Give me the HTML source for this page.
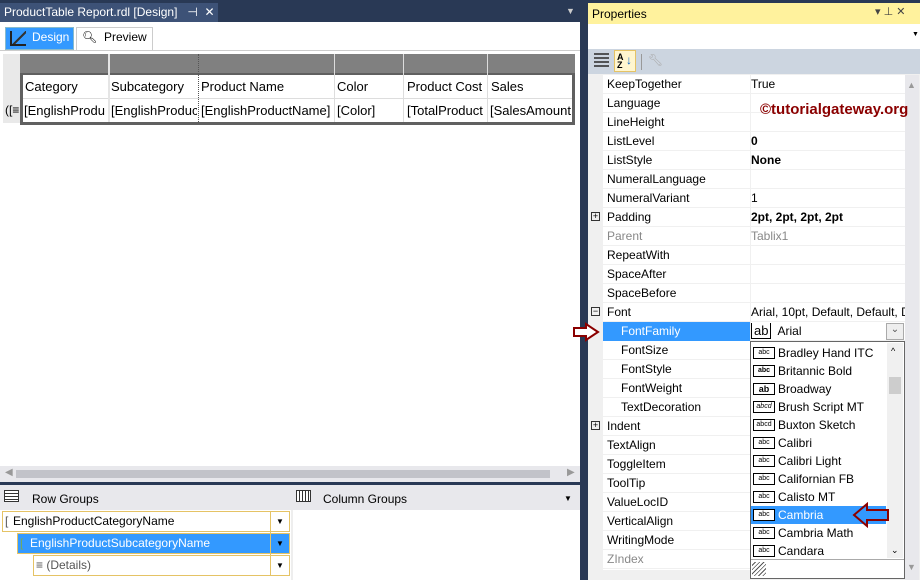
<!DOCTYPE html><html><head><style>
*{box-sizing:border-box;margin:0;padding:0}
body{width:920px;height:580px;overflow:hidden;background:#293955;font-family:"Liberation Sans",sans-serif;font-size:12px;position:relative}
.a{position:absolute}
.t{white-space:nowrap;overflow:hidden}
.pr{position:absolute;left:603px;width:302px;height:19px;border-bottom:1px solid #f0f0f0}
.pr .n{position:absolute;left:4px;top:2px}
.pr .v{position:absolute;left:148px;top:2px;white-space:nowrap;overflow:hidden;width:154px;height:16px}
.pr:before{content:"";position:absolute;left:147px;top:0;bottom:0;border-left:1px solid #f0f0f0}
.li{position:absolute;left:1px;width:135px;height:18px}
.li .ic{position:absolute;left:2px;top:3px;width:22px;height:12px;border:1px solid #000;background:#fff;font-size:7px;line-height:10px;text-align:center;color:#000}
.li span{position:absolute;left:27px;top:2px}
</style></head><body>
<div class="a" style="left:0;top:3px;width:218px;height:19px;background:#3d5277"></div>
<div class="a t" style="left:4px;top:5px;color:#fff;font-size:12px">ProductTable Report.rdl [Design]&nbsp;&nbsp; ⊣&nbsp; ✕</div>
<div class="a" style="left:566px;top:6px;color:#ccc;font-size:9px">▼</div>
<div class="a" style="left:0;top:22px;width:580px;height:444px;background:#fff"></div>
<div class="a" style="left:5px;top:27px;width:69px;height:23px;background:#3399ff;border:1px solid #8bc"></div>
<div class="a" style="left:10px;top:31px;width:16px;height:15px;border-left:2px solid #222;border-bottom:2px solid #222;background:linear-gradient(135deg,transparent 50%,#333 50%,#333 60%,transparent 60%)"></div>
<div class="a" style="left:32px;top:30px;color:#fff">Design</div>
<div class="a" style="left:76px;top:27px;width:77px;height:23px;border:1px solid #ccc;border-bottom:none;background:#fff"></div>
<div class="a" style="left:82px;top:30px;font-size:12px">🔍︎</div>
<div class="a" style="left:104px;top:30px">Preview</div>
<div class="a" style="left:0;top:50px;width:580px;height:1px;background:#ccc"></div>
<div class="a" style="left:3px;top:54px;width:17px;height:69px;background:#e9e9e9"></div>
<div class="a" style="left:20px;top:54px;width:555px;height:19px;background:#808080"></div>
<div class="a" style="left:20px;top:73px;width:555px;height:52px;background:#606060"></div>
<div class="a" style="left:23px;top:75px;width:549px;height:47px;background:#fff"></div>
<div class="a" style="left:23px;top:98px;width:549px;height:1px;background:#ddd"></div>
<div class="a" style="left:108px;top:54px;width:2px;height:68px;background:#e5e5e5"></div>
<div class="a" style="left:198px;top:54px;width:1px;height:68px;border-left:1px dotted #555"></div>
<div class="a" style="left:334px;top:54px;width:1px;height:68px;background:#ddd"></div>
<div class="a" style="left:403px;top:54px;width:1px;height:68px;background:#ddd"></div>
<div class="a" style="left:487px;top:54px;width:1px;height:68px;background:#ddd"></div>
<div class="a" style="left:25px;top:79px;font-size:13px">Category</div>
<div class="a" style="left:111px;top:79px;font-size:13px">Subcategory</div>
<div class="a" style="left:201px;top:79px;font-size:13px">Product Name</div>
<div class="a" style="left:337px;top:79px;font-size:13px">Color</div>
<div class="a" style="left:407px;top:79px;font-size:13px">Product Cost</div>
<div class="a" style="left:491px;top:79px;font-size:13px">Sales</div>
<div class="a t" style="left:24px;top:103px;font-size:13px;width:84px">[EnglishProdu</div>
<div class="a t" style="left:111px;top:103px;font-size:13px;width:86px">[EnglishProduc</div>
<div class="a t" style="left:201px;top:103px;font-size:13px">[EnglishProductName]</div>
<div class="a t" style="left:337px;top:103px;font-size:13px">[Color]</div>
<div class="a t" style="left:407px;top:103px;font-size:13px;width:79px">[TotalProduct</div>
<div class="a t" style="left:490px;top:103px;font-size:13px;width:82px">[SalesAmount</div>
<div class="a" style="left:5px;top:103px;font-size:12px">([≡</div>
<div class="a" style="left:0;top:466px;width:580px;height:16px;background:#e8e8ec"></div>
<div class="a" style="left:16px;top:470px;width:534px;height:8px;background:#c2c3c9"></div>
<div class="a" style="left:5px;top:467px;font-size:10px;color:#999">◀</div>
<div class="a" style="left:567px;top:467px;font-size:10px;color:#999">▶</div>
<div class="a" style="left:0;top:485px;width:580px;height:95px;background:#fff"></div>
<div class="a" style="left:0;top:485px;width:580px;height:25px;background:#e8e8ec"></div>
<div class="a" style="left:291px;top:510px;width:2px;height:70px;background:#eee"></div>
<div class="a" style="left:4px;top:490px;width:15px;height:12px;border:1px solid #333;background:repeating-linear-gradient(#fff 0 2px,#333 2px 3px)"></div>
<div class="a" style="left:32px;top:492px">Row Groups</div>
<div class="a" style="left:296px;top:490px;width:15px;height:12px;border:1px solid #333;background:repeating-linear-gradient(90deg,#fff 0 2px,#333 2px 3px)"></div>
<div class="a" style="left:323px;top:492px">Column Groups</div>
<div class="a" style="left:564px;top:494px;font-size:8px">▼</div>
<div class="a" style="left:2px;top:511px;width:288px;height:21px;border:1px solid #e5c365;background:#fff"></div>
<div class="a" style="left:5px;top:514px;color:#555">[</div>
<div class="a" style="left:13px;top:514px">EnglishProductCategoryName</div>
<div class="a" style="left:17px;top:533px;width:273px;height:21px;background:#3399ff;border:1px solid #e5c365"></div>
<div class="a" style="left:20px;top:536px;color:#7a5">[</div>
<div class="a" style="left:30px;top:536px;color:#fff">EnglishProductSubcategoryName</div>
<div class="a" style="left:33px;top:555px;width:257px;height:21px;border:1px solid #e5c365;background:#fff"></div>
<div class="a" style="left:36px;top:558px;color:#555">≡ (Details)</div>
<div class="a" style="left:270px;top:511px;width:1px;height:64px;background:#e5c365"></div>
<div class="a" style="left:276px;top:517px;font-size:8px">▼</div>
<div class="a" style="left:276px;top:539px;font-size:8px">▼</div>
<div class="a" style="left:276px;top:561px;font-size:8px">▼</div>
<div class="a" style="left:588px;top:3px;width:332px;height:21px;background:#fff29d"></div>
<div class="a" style="left:592px;top:7px">Properties</div>
<div class="a" style="left:875px;top:5px;font-size:11px;color:#444">▾ ⊥ ✕</div>
<div class="a" style="left:588px;top:24px;width:332px;height:25px;background:#fff"></div>
<div class="a" style="left:912px;top:31px;font-size:7px">▼</div>
<div class="a" style="left:588px;top:49px;width:332px;height:25px;background:#ccd5e0"></div>
<div class="a" style="left:594px;top:53px;width:15px;height:15px;background:repeating-linear-gradient(#333 0 2px,transparent 2px 4px);opacity:.8"></div>
<div class="a" style="left:614px;top:50px;width:22px;height:22px;background:#fff6cf;border:1px solid #e5c365"></div>
<div class="a" style="left:617px;top:53px;font-size:9px;font-weight:bold;line-height:8px">A<br>Z</div>
<div class="a" style="left:626px;top:53px;color:#0a64c8;font-weight:bold">↓</div>
<div class="a" style="left:641px;top:54px;width:1px;height:16px;background:#999"></div>
<div class="a" style="left:648px;top:53px;color:#aaa">🔧︎</div>
<div class="a" style="left:588px;top:74px;width:332px;height:506px;background:#f0f0f0"></div>
<div class="a" style="left:603px;top:75px;width:302px;height:495px;background:#fff"></div>
<div class="a" style="left:905px;top:75px;width:14px;height:505px;background:#e8e8ec"></div>
<div class="a" style="left:907px;top:80px;font-size:9px;color:#999">▲</div>
<div class="a" style="left:907px;top:562px;font-size:9px;color:#999">▼</div>
<div class="pr" style="top:75px"><div class="n">KeepTogether</div><div class="v">True</div></div>
<div class="pr" style="top:94px"><div class="n">Language</div></div>
<div class="pr" style="top:113px"><div class="n">LineHeight</div></div>
<div class="pr" style="top:132px"><div class="n">ListLevel</div><div class="v"><b>0</b></div></div>
<div class="pr" style="top:151px"><div class="n">ListStyle</div><div class="v"><b>None</b></div></div>
<div class="pr" style="top:170px"><div class="n">NumeralLanguage</div></div>
<div class="pr" style="top:189px"><div class="n">NumeralVariant</div><div class="v">1</div></div>
<div class="pr" style="top:208px"><div class="n">Padding</div><div class="v"><b>2pt, 2pt, 2pt, 2pt</b></div></div>
<div class="pr" style="top:227px;color:#888"><div class="n">Parent</div><div class="v">Tablix1</div></div>
<div class="pr" style="top:246px"><div class="n">RepeatWith</div></div>
<div class="pr" style="top:265px"><div class="n">SpaceAfter</div></div>
<div class="pr" style="top:284px"><div class="n">SpaceBefore</div></div>
<div class="pr" style="top:303px"><div class="n">Font</div><div class="v">Arial, 10pt, Default, Default, Default</div></div>
<div class="pr" style="top:322px"><div class="n" style="left:0;top:0;width:147px;height:19px;background:#3399ff;color:#fff;padding:2px 18px">FontFamily</div><div class="v" style="top:1px"><span style="border:1px solid #000;padding:0 2px;font-size:13px">ab</span>&nbsp; Arial</div></div>
<div class="a" style="left:886px;top:323px;width:18px;height:17px;border:1px solid #aaa;background:#eee;font-size:10px;text-align:center;color:#555">⌄</div>
<div class="pr" style="top:341px"><div class="n" style="left:18px">FontSize</div></div>
<div class="pr" style="top:360px"><div class="n" style="left:18px">FontStyle</div></div>
<div class="pr" style="top:379px"><div class="n" style="left:18px">FontWeight</div></div>
<div class="pr" style="top:398px"><div class="n" style="left:18px">TextDecoration</div></div>
<div class="pr" style="top:417px"><div class="n">Indent</div></div>
<div class="pr" style="top:436px"><div class="n">TextAlign</div></div>
<div class="pr" style="top:455px"><div class="n">ToggleItem</div></div>
<div class="pr" style="top:474px"><div class="n">ToolTip</div></div>
<div class="pr" style="top:493px"><div class="n">ValueLocID</div></div>
<div class="pr" style="top:512px"><div class="n">VerticalAlign</div></div>
<div class="pr" style="top:531px"><div class="n">WritingMode</div></div>
<div class="pr" style="top:550px;color:#888"><div class="n">ZIndex</div></div>
<div class="a" style="left:591px;top:212px;width:9px;height:9px;border:1px solid #333;font-size:9px;line-height:7px;text-align:center">+</div>
<div class="a" style="left:591px;top:307px;width:9px;height:9px;border:1px solid #333;font-size:9px;line-height:7px;text-align:center">−</div>
<div class="a" style="left:591px;top:421px;width:9px;height:9px;border:1px solid #333;font-size:9px;line-height:7px;text-align:center">+</div>
<div class="a" style="left:760px;top:101px;color:#8b0000;font-weight:bold;font-size:15px">©tutorialgateway.org</div>
<svg class="a" style="left:572px;top:322px" width="30" height="20"><path d="M2 6H14V2L26 10L14 18V14H2Z" fill="#fff" stroke="#8b0000" stroke-width="2"/></svg>
<div class="a" style="left:750px;top:341px;width:155px;height:238px;background:#fff;border:1px solid #666"></div>
<div class="a" style="left:887px;top:343px;width:16px;height:215px;background:#f0f0f0"></div>
<div class="a" style="left:889px;top:377px;width:12px;height:17px;background:#cdcdcd"></div>
<div class="a" style="left:891px;top:346px;font-size:9px">^</div>
<div class="a" style="left:891px;top:545px;font-size:9px">⌄</div>
<div class="a" style="left:751px;top:559px;width:153px;height:1px;background:#aaa"></div>
<div class="a" style="left:752px;top:562px;width:14px;height:14px;background:repeating-linear-gradient(135deg,#fff 0 2px,#555 2px 3px)"></div>
<div class="a" style="left:750px;top:344px;width:138px;height:215px">
<div class="li" style="top:0"><div class="ic">abc</div><span>Bradley Hand ITC</span></div>
<div class="li" style="top:18px"><div class="ic" style="font-weight:bold">abc</div><span>Britannic Bold</span></div>
<div class="li" style="top:36px"><div class="ic" style="font-weight:bold;font-size:9px">ab</div><span>Broadway</span></div>
<div class="li" style="top:54px"><div class="ic" style="font-style:italic">abcd</div><span>Brush Script MT</span></div>
<div class="li" style="top:72px"><div class="ic">abcd</div><span>Buxton Sketch</span></div>
<div class="li" style="top:90px"><div class="ic">abc</div><span>Calibri</span></div>
<div class="li" style="top:108px"><div class="ic">abc</div><span>Calibri Light</span></div>
<div class="li" style="top:126px"><div class="ic">abc</div><span>Californian FB</span></div>
<div class="li" style="top:144px"><div class="ic">abc</div><span>Calisto MT</span></div>
<div class="li" style="top:162px;background:#3399ff;color:#fff"><div class="ic">abc</div><span>Cambria</span></div>
<div class="li" style="top:180px"><div class="ic">abc</div><span>Cambria Math</span></div>
<div class="li" style="top:198px"><div class="ic">abc</div><span>Candara</span></div>
</div>
<svg class="a" style="left:852px;top:502px" width="38" height="26"><path d="M2 13L15 2V8H36V18H15V24Z" fill="#3399ff" stroke="#8b0000" stroke-width="2"/></svg>
</body></html>
